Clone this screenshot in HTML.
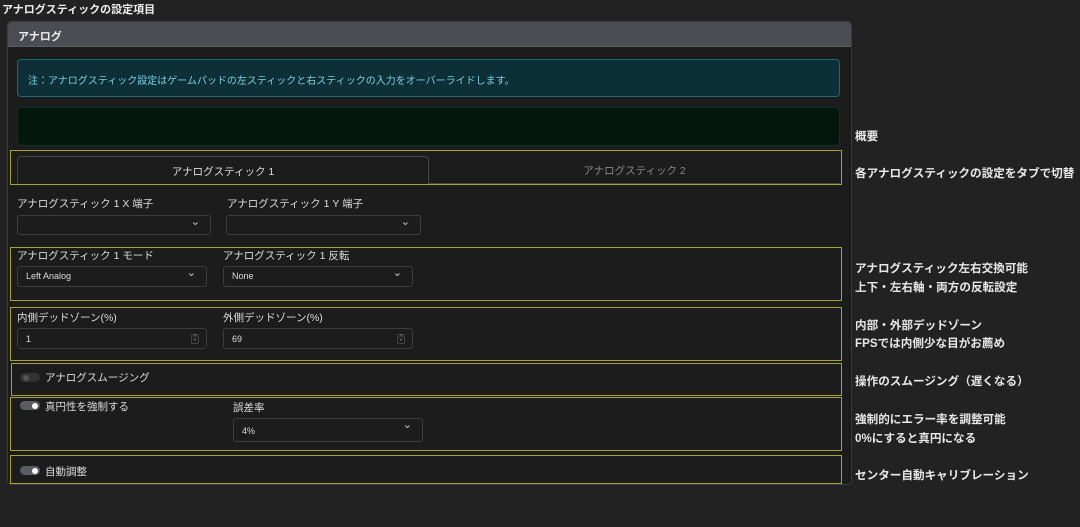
<!DOCTYPE html>
<html><head><meta charset="utf-8"><style>
*{box-sizing:border-box;margin:0;padding:0}
body{width:1080px;height:527px;background:#222222;font-family:"Liberation Sans","Noto Sans CJK JP",sans-serif;color:#ddd;position:relative;overflow:hidden;font-size:11px}
.a{position:absolute}
.t{font-weight:bold;font-size:11px;color:#eee}
.panel{left:7px;top:21px;width:845px;height:464px;background:#1c1c1d;border:1px solid #3a3a3c;border-radius:4px}
.hd{left:8px;top:22px;width:843px;height:25px;background:#4a4d52;border-bottom:1px solid #5a5d62;border-radius:4px 4px 0 0;font-weight:bold;font-size:11px;padding:6px 10px;color:#eee}
.y{border:1px solid #a8a235}
.sel{border:1px solid #3d3d40;border-radius:3px;background:#1c1c1d;font-size:9px;color:#ddd;padding:4px 8px}
.dd:after{content:"⌄";position:absolute;right:10px;top:-1px;font-size:11px;color:#ccc}
.sp{position:absolute;right:7px;top:5px;width:8px;height:10px;border:1px solid #444;border-radius:2px;font-size:6px;line-height:4px;text-align:center;color:#888}
.lb{font-size:10.5px;color:#ddd}
.tg{width:20px;height:9px;border-radius:5px;background:#5a5d62}
.tg:after{content:"";position:absolute;right:2px;top:1.5px;width:6px;height:6px;border-radius:50%;background:#fff}
.tg.off{background:#333}
.tg.off:after{left:3px;right:auto;background:#555}
.r{left:855px;font-size:11.6px;font-weight:bold;color:#e8e8e8}
</style></head><body>
<div class="a t" style="left:2px;top:1px">アナログスティックの設定項目</div>
<div class="a panel"></div>
<div class="a hd">アナログ</div>
<div class="a" style="left:17px;top:59px;width:823px;height:38px;background:#0c2f38;border:1px solid #1f6676;border-radius:4px;color:#7fd0e0;font-size:10px;padding:12px 10px">注：アナログスティック設定はゲームパッドの左スティックと右スティックの入力をオーバーライドします。</div>
<div class="a" style="left:17px;top:107px;width:823px;height:39px;background:#03170e;border:1px solid #0f3520;border-radius:4px"></div>
<div class="a y" style="left:10px;top:150px;width:832px;height:35px"></div>
<div class="a" style="left:17px;top:156px;width:412px;height:28px;border:1px solid #444;border-bottom:none;border-radius:4px 4px 0 0;text-align:center;padding-top:7px;font-size:10.5px;color:#ddd">アナログスティック 1</div>
<div class="a" style="left:429px;top:183px;width:411px;height:1px;background:#444"></div>
<div class="a" style="left:429px;top:163px;width:411px;text-align:center;font-size:10.5px;color:#888">アナログスティック 2</div>
<div class="a lb" style="left:17px;top:196px">アナログスティック 1 X 端子</div>
<div class="a lb" style="left:227px;top:196px">アナログスティック 1 Y 端子</div>
<div class="a sel dd" style="left:17px;top:215px;width:194px;height:20px"></div>
<div class="a sel dd" style="left:226px;top:215px;width:195px;height:20px"></div>
<div class="a y" style="left:10px;top:247px;width:832px;height:54px"></div>
<div class="a lb" style="left:17px;top:248px">アナログスティック 1 モード</div>
<div class="a lb" style="left:223px;top:248px">アナログスティック 1 反転</div>
<div class="a sel dd" style="left:17px;top:266px;width:190px;height:21px">Left Analog</div>
<div class="a sel dd" style="left:223px;top:266px;width:190px;height:21px">None</div>
<div class="a y" style="left:10px;top:307px;width:832px;height:54px"></div>
<div class="a lb" style="left:17px;top:310px">内側デッドゾーン(%)</div>
<div class="a lb" style="left:223px;top:310px">外側デッドゾーン(%)</div>
<div class="a sel" style="left:17px;top:328px;width:190px;height:21px;padding-top:5px">1<span class="sp">˄<br>˅</span></div>
<div class="a sel" style="left:223px;top:328px;width:190px;height:21px;padding-top:5px">69<span class="sp">˄<br>˅</span></div>
<div class="a y" style="left:11px;top:363px;width:831px;height:33px"></div>
<div class="a tg off" style="left:20px;top:373px"></div>
<div class="a lb" style="left:45px;top:370px">アナログスムージング</div>
<div class="a y" style="left:10px;top:397px;width:832px;height:54px"></div>
<div class="a tg" style="left:20px;top:401px"></div>
<div class="a lb" style="left:45px;top:399px">真円性を強制する</div>
<div class="a lb" style="left:233px;top:400px">誤差率</div>
<div class="a sel dd" style="left:233px;top:418px;width:190px;height:24px;padding-top:7px">4%</div>
<div class="a y" style="left:10px;top:455px;width:832px;height:29px"></div>
<div class="a tg" style="left:20px;top:466px"></div>
<div class="a lb" style="left:45px;top:464px">自動調整</div>
<div class="a r" style="top:128px">概要</div>
<div class="a r" style="top:165px">各アナログスティックの設定をタブで切替</div>
<div class="a r" style="top:260px">アナログスティック左右交換可能</div>
<div class="a r" style="top:279px">上下・左右軸・両方の反転設定</div>
<div class="a r" style="top:317px">内部・外部デッドゾーン</div>
<div class="a r" style="top:335px">FPSでは内側少な目がお薦め</div>
<div class="a r" style="top:373px">操作のスムージング（遅くなる）</div>
<div class="a r" style="top:411px">強制的にエラー率を調整可能</div>
<div class="a r" style="top:430px">0%にすると真円になる</div>
<div class="a r" style="top:467px">センター自動キャリブレーション</div>
</body></html>
